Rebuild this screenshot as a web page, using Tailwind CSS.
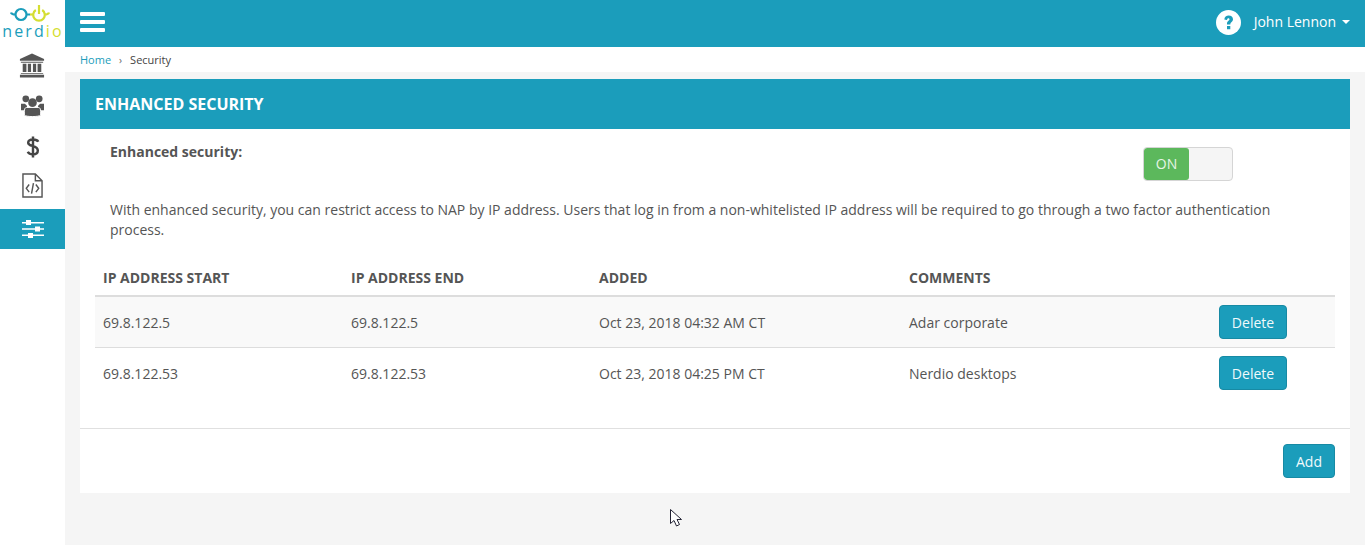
<!DOCTYPE html>
<html>
<head>
<meta charset="utf-8">
<script src="https://cdn.jsdelivr.net/npm/@tailwindcss/browser@4"></script>
</head>
<body class="font-['Open_Sans',sans-serif] text-[14px] leading-[20px] text-[#555] bg-[#f5f5f5] overflow-hidden">
<div class="relative flex w-[1365px] h-[545px]">
  <aside class="w-[65px] h-full bg-white shrink-0 flex flex-col">
    <div class="h-[45px] flex flex-col items-center">
      <svg width="65" height="21" viewBox="0 0 65 21" class="mt-[4px]" fill="none" stroke-width="2.200">
        <circle cx="21" cy="10.500" r="5.500" stroke="#1b9dbb"/>
        <path d="M11 8.500C11.500 10.500 13 10.500 15.500 10.500M26.500 10.500H30" stroke="#1b9dbb"/>
        <path d="M30 10.500H33.500" stroke="#d5de32"/>
        <path d="M35.800 6a5.800 5.800 0 1 0 6.400 0M39 1V10M44.500 10.500C47 10.500 48.500 10.500 49 8.500" stroke="#d5de32"/>
      </svg>
      <div class="text-[16px] leading-[14px] tracking-[2.100px] font-medium ml-[1px] -mt-[1px] whitespace-nowrap"><span class="text-[#1b9dbb]">nerd</span><span class="text-[#d5de32]">io</span></div>
    </div>
    <div class="h-[40px] flex items-center justify-center pr-[2px]">
      <svg width="26" height="25" viewBox="0 0 28 26" fill="#555"><path d="M14 0 27 6V8H1V6Z"/><path d="M2 9H26V10H2ZM4 11H8V20H4ZM9.500 11H13V20H9.500ZM15 11H18.500V20H15ZM20 11H24V20H20ZM2 21H26V22H2ZM1 23H27V26H1Z"/></svg>
    </div>
    <div class="h-[40px] flex items-center justify-center pt-[2px]">
      <svg width="25" height="23" viewBox="0 0 26 24" fill="#555"><circle cx="6" cy="4" r="3.500"/><circle cx="20" cy="4" r="3.500"/><circle cx="13" cy="8" r="4.500"/><path d="M1 9h4l2 2 1 5H1ZM25 9h-4l-2 2-1 5h7Z"/><path d="M7 13h12c2 0 2.500 2 2.500 4v4c-2 2-15 2-17 0v-4c0-2 .5-4 2.500-4Z" stroke="#fff" stroke-width="1"/></svg>
    </div>
    <div class="h-[40px] flex items-center justify-center pt-[4px]">
      <svg width="14" height="24" viewBox="0 0 16 26" fill="none" stroke="#444" stroke-width="2.800"><path d="M14 7C13 5 11 4.500 8 4.500C4 4.500 2.500 6 2.500 8C2.500 13 13.500 10.500 13.500 17C13.500 20 11 21.500 8 21.500C5 21.500 3 20.500 2 18.500M8 1V25"/></svg>
    </div>
    <div class="h-[40px] flex items-center justify-center">
      <svg width="21" height="25" viewBox="0 0 22 26" fill="none" stroke="#555" stroke-width="1.500"><path d="M1 1H14L21 8V25H1Z"/><path d="M14 1V8H21"/><path d="M7.500 12 4.500 16 7.500 20M14.500 12 17.500 16 14.500 20M12 10.500 10 21.500" stroke-width="1.500"/></svg>
    </div>
    <div class="h-[40px] mt-[4px] bg-[#1b9dbb] flex items-center justify-center">
      <svg width="22" height="20" viewBox="0 0 22 20" fill="#fff"><path d="M0 3H22V4.500H0ZM0 9.300H22V10.800H0ZM0 15.500H22V17H0Z"/><rect x="4" y="1" width="5" height="5"/><rect x="13" y="7.500" width="5" height="5"/><rect x="6" y="14" width="5" height="5"/></svg>
    </div>
  </aside>
  <div class="flex-1 min-w-0 flex flex-col">
    <header class="h-[47px] bg-[#1b9dbb] flex items-center justify-between pl-[15px] pr-[15px] pb-[3px] text-white">
      <div class="flex flex-col gap-[4px] w-[25px]">
        <span class="block h-[4px] bg-white rounded-[1px]"></span>
        <span class="block h-[4px] bg-white rounded-[1px]"></span>
        <span class="block h-[4px] bg-white rounded-[1px]"></span>
      </div>
      <div class="flex items-center">
        <svg width="25" height="25" viewBox="0 0 25 25" class="mr-[13px]"><circle cx="12.500" cy="12.500" r="12.500" fill="#fff"/><path d="M8.300 9.500C8.500 6.800 10.300 5.500 12.700 5.500C15.300 5.500 17 7 17 9.200C17 11.900 14.300 12 14.300 14.500H11V13.700C11 11 13.500 10.800 13.500 9.300C13.500 8.600 13 8.200 12.400 8.200C11.700 8.200 11.200 8.700 11 9.900ZM11 16H14.300V19.300H11Z" fill="#1b9dbb"/></svg>
        <span class="text-[14px] text-white">John Lennon</span>
        <span class="ml-[6px] w-0 h-0 border-x-[4px] border-x-transparent border-t-[4px] border-t-white"></span>
      </div>
    </header>
    <nav class="h-[25px] bg-white flex items-center pl-[15px] text-[11px] text-[#444]">
      <span class="text-[#1b9dbb]">Home</span><span class="mx-[8px] text-[#666] text-[10px]">›</span><span>Security</span>
    </nav>
    <main class="flex-1 pt-[7px] pl-[15px] pr-[15px]">
      <section class="bg-white h-[414px]">
        <h2 class="h-[50px] bg-[#1b9dbb] text-white font-bold text-[16px] flex items-center pl-[15px]">ENHANCED SECURITY</h2>
        <div class="h-[300px] border-b border-[#e0e0e0] pl-[15px] pr-[15px]">
          <div class="flex justify-between pl-[15px] pr-[102px] pt-[13px]">
            <span class="font-bold">Enhanced security:</span>
            <div class="flex w-[90px] h-[34px] mt-[5px] border border-[#d5d5d5] rounded-[4px] bg-[#f5f5f5] overflow-hidden">
              <span class="w-[45px] h-full bg-[#5cb85c] text-[#e6f5e6] rounded-[3px] flex items-center justify-center">ON</span>
            </div>
          </div>
          <p class="pl-[15px] mt-[19px] w-[1225px]">With enhanced security, you can restrict access to NAP by IP address. Users that log in from a non-whitelisted IP address will be required to go through a two factor authentication process.</p>
          <table class="w-[1240px] table-fixed mt-[20px] border-collapse">
            <colgroup><col class="w-[248px]"><col class="w-[248px]"><col class="w-[310px]"><col class="w-[310px]"><col class="w-[124px]"></colgroup>
            <thead>
              <tr class="h-[36px] border-b-2 border-[#ddd] text-left font-bold">
                <th class="px-[8px]">IP ADDRESS START</th><th class="px-[8px]">IP ADDRESS END</th><th class="px-[8px]">ADDED</th><th class="px-[8px]">COMMENTS</th><th></th>
              </tr>
            </thead>
            <tbody>
              <tr class="h-[51px] bg-[#f9f9f9] border-b border-[#ddd]">
                <td class="px-[8px] pt-[2px]">69.8.122.5</td><td class="px-[8px] pt-[2px]">69.8.122.5</td><td class="px-[8px] pt-[2px]">Oct 23, 2018 04:32 AM CT</td><td class="px-[8px] pt-[2px]">Adar corporate</td>
                <td class="px-[8px]"><button class="w-[68px] h-[34px] pt-[2px] bg-[#1b9dbb] border border-[#178aa4] rounded-[4px] text-[#f0fafc]">Delete</button></td>
              </tr>
              <tr class="h-[51px]">
                <td class="px-[8px] pt-[2px]">69.8.122.53</td><td class="px-[8px] pt-[2px]">69.8.122.53</td><td class="px-[8px] pt-[2px]">Oct 23, 2018 04:25 PM CT</td><td class="px-[8px] pt-[2px]">Nerdio desktops</td>
                <td class="px-[8px]"><button class="w-[68px] h-[34px] pt-[2px] bg-[#1b9dbb] border border-[#178aa4] rounded-[4px] text-[#f0fafc]">Delete</button></td>
              </tr>
            </tbody>
          </table>
        </div>
        <div class="flex justify-end pr-[15px] pt-[15px]">
          <button class="w-[52px] h-[34px] pt-[2px] bg-[#1b9dbb] border border-[#178aa4] rounded-[4px] text-[#f0fafc]">Add</button>
        </div>
      </section>
    </main>
  </div>
  <svg class="absolute left-[670px] top-[509px]" width="13" height="20" viewBox="0 0 13 20" fill="#fff" stroke="#223" stroke-width="1"><path d="M.5 .5V14.500L4 11.500 6.500 17 9.500 15.500 7 10.500H11.500Z"/></svg>
</div>
</body>
</html>
